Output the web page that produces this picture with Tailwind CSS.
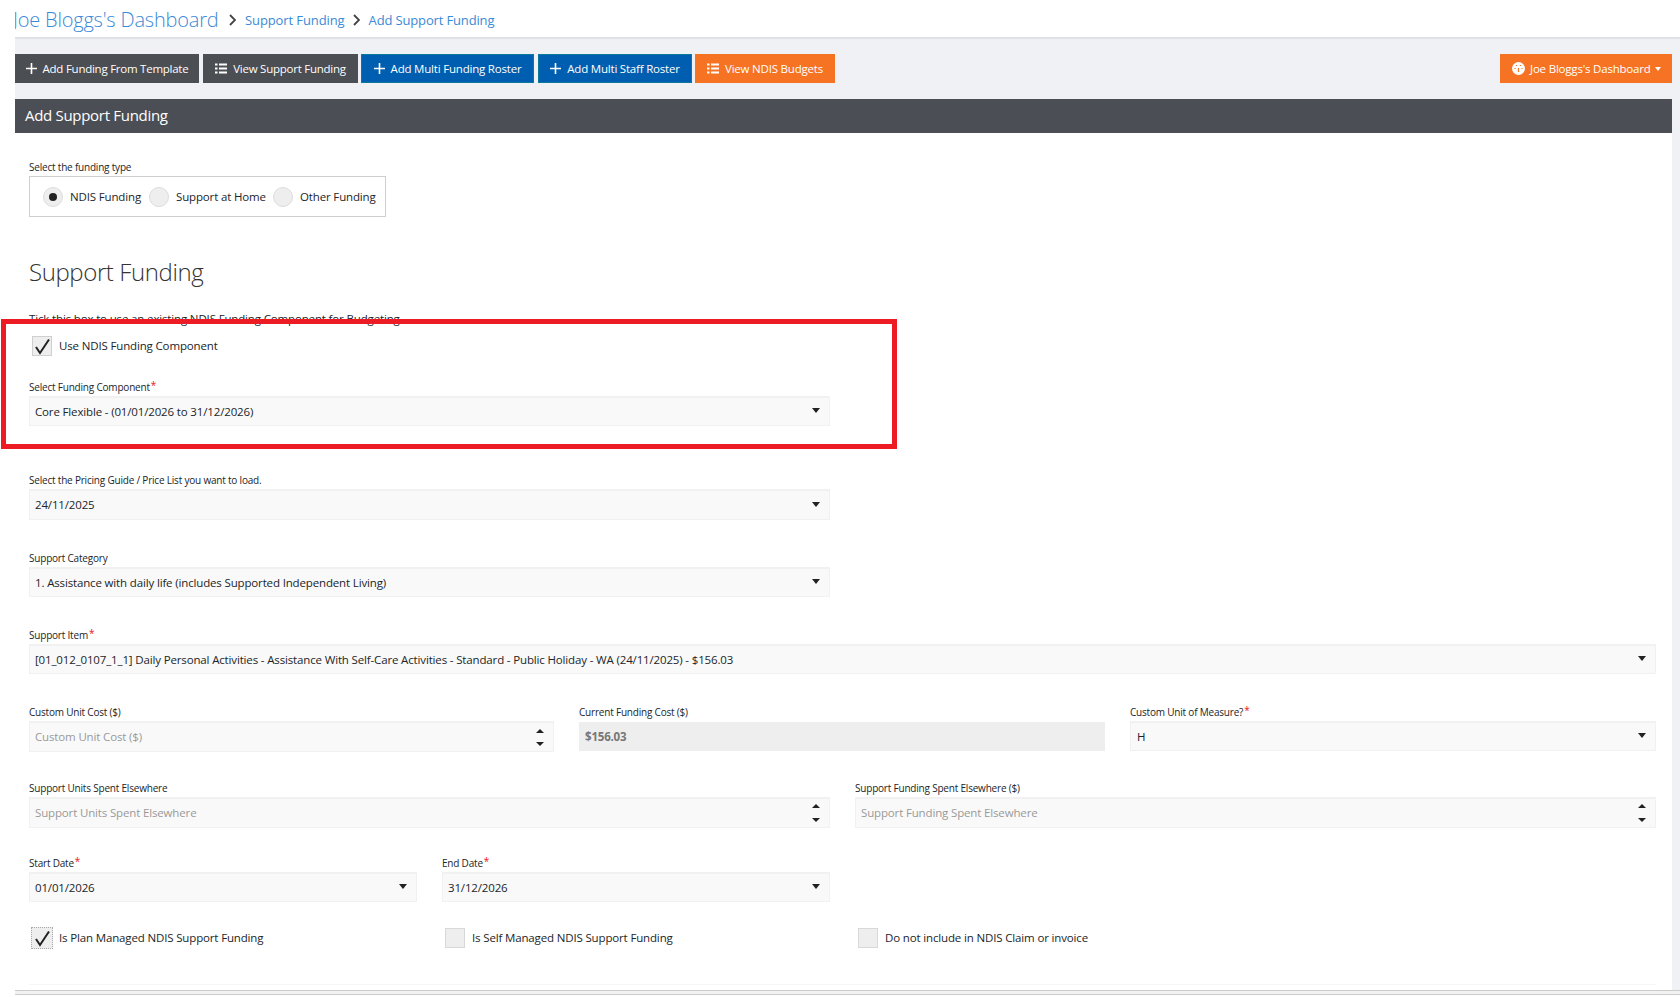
<!DOCTYPE html>
<html lang="en">
<head>
    <meta charset="UTF-8">
    <title>Add Support Funding</title>
    <script src="https://cdn.jsdelivr.net/npm/@tailwindcss/browser@4"></script>
</head>
<body class="bg-white font-['Open_Sans',sans-serif] text-[11.5px] text-[#212529] overflow-hidden">
<div class="relative h-[997px] w-[1680px] overflow-hidden">

    <!-- Breadcrumb header -->
    <header class="flex h-[37px] items-center pl-[15px] pt-[3px] text-[#3a8ad6]">
        <span class="w-[203px] overflow-hidden whitespace-nowrap text-[20px] font-light tracking-[-0.2px]"><span class="-ml-[2px] inline-block">Joe Bloggs's Dashboard</span></span>
        <svg class="ml-[11px] mr-[9px]" width="7" height="12" viewBox="0 0 7 12" fill="none" stroke="#444" stroke-width="1.8"><path d="M1 1l5 5-5 5"/></svg>
        <span class="pt-[2px] text-[13px] tracking-[-0.1px]">Support Funding</span>
        <svg class="ml-[8px] mr-[9px]" width="7" height="12" viewBox="0 0 7 12" fill="none" stroke="#444" stroke-width="1.8"><path d="M1 1l5 5-5 5"/></svg>
        <span class="pt-[2px] text-[13px] tracking-[-0.15px]">Add Support Funding</span>
    </header>

    <div class="ml-[15px] h-[953px] border-t-2 border-[#dfe1e6] bg-[#f0f1f5] pr-[8px]">
        <!-- Action buttons -->
        <div class="flex h-[60px] items-start justify-between pt-[15px] text-white">
            <div class="flex">
                <button class="flex h-[29px] w-[184px] items-center justify-center gap-[6px] bg-[#4b4e53] tracking-[-0.25px]">
                    <svg width="11" height="11" viewBox="0 0 11 11" stroke="#fff" stroke-width="1.6"><path d="M5.500 0v11M0 5.500h11"/></svg>Add Funding From Template
                </button>
                <button class="ml-[4px] flex h-[29px] w-[155px] items-center justify-center gap-[6px] bg-[#4b4e53] tracking-[-0.25px]">
                    <svg width="12" height="11" viewBox="0 0 12 11" stroke="#fff" stroke-width="2.2"><path d="M0 1.500h2.500M4 1.500h8M0 5.500h2.500M4 5.500h8M0 9.500h2.500M4 9.500h8"/></svg>View Support Funding
                </button>
                <button class="ml-[3px] flex h-[29px] w-[173px] items-center justify-center gap-[6px] border border-[#0a7a9c] bg-[#005eb0] tracking-[-0.2px]">
                    <svg width="11" height="11" viewBox="0 0 11 11" stroke="#fff" stroke-width="1.6"><path d="M5.500 0v11M0 5.500h11"/></svg>Add Multi Funding Roster
                </button>
                <button class="ml-[4px] flex h-[29px] w-[154px] items-center justify-center gap-[6px] border border-[#0a7a9c] bg-[#005eb0] tracking-[-0.2px]">
                    <svg width="11" height="11" viewBox="0 0 11 11" stroke="#fff" stroke-width="1.6"><path d="M5.500 0v11M0 5.500h11"/></svg>Add Multi Staff Roster
                </button>
                <button class="ml-[3px] flex h-[29px] w-[140px] items-center justify-center gap-[6px] bg-[#f57322] tracking-[-0.2px]">
                    <svg width="12" height="11" viewBox="0 0 12 11" stroke="#fff" stroke-width="2.2"><path d="M0 1.500h2.500M4 1.500h8M0 5.500h2.500M4 5.500h8M0 9.500h2.500M4 9.500h8"/></svg>View NDIS Budgets
                </button>
            </div>
            <button class="flex h-[29px] w-[172px] items-center bg-[#f57322] pl-[12px] tracking-[-0.2px]">
                <svg width="13" height="13" viewBox="0 0 13 13"><circle cx="6.500" cy="6.500" r="6.500" fill="#fff"/><path d="M6.500 6v4M3 6v1M10 6v1M4.500 3v1M8.500 3v1" stroke="#f57322" stroke-width="1.200"/></svg>
                <span class="ml-[5px]">Joe Bloggs's Dashboard</span>
                <span class="ml-[4px] h-0 w-0 border-x-[3.500px] border-t-[4px] border-x-transparent border-t-white"></span>
            </button>
        </div>

        <!-- Panel -->
        <section class="relative h-[891px] bg-white">
            <h2 class="flex h-[34px] items-center bg-[#4b4e55] pb-[2px] pl-[10px] text-[15px] tracking-[-0.3px] text-white">Add Support Funding</h2>

            <div class="pl-[14px] pr-[16px]">
                <p class="mt-[28px] text-[10px] leading-[12px] tracking-[-0.2px]">Select the funding type</p>
                <div class="mt-[3px] flex h-[41px] w-[357px] items-center border border-[#cfcfcf] pl-[13px] tracking-[-0.15px]">
                    <span class="flex h-[20px] w-[20px] items-center justify-center rounded-full border border-[#dcdcdc] bg-[#eeeeee]"><span class="h-[8px] w-[8px] rounded-full bg-[#222]"></span></span>
                    <span class="ml-[7px] w-[79px] pt-[1px]">NDIS Funding</span>
                    <span class="h-[20px] w-[20px] rounded-full border border-[#dcdcdc] bg-[#eeeeee]"></span>
                    <span class="ml-[7px] w-[97px] pt-[1px]">Support at Home</span>
                    <span class="h-[20px] w-[20px] rounded-full border border-[#dcdcdc] bg-[#eeeeee]"></span>
                    <span class="ml-[7px] pt-[1px]">Other Funding</span>
                </div>

                <h3 class="mt-[38px] text-[24px] font-light leading-[34px] tracking-[-0.4px] text-[#333]">Support Funding</h3>
                <p class="mt-[22px] leading-[16px] tracking-[-0.15px]">Tick this box to use an existing NDIS Funding Component for Budgeting</p>

                <label class="ml-[3px] mt-[9px] flex h-[20px] items-center tracking-[-0.15px]">
                    <span class="mr-[7px] flex h-[20px] w-[20px] items-center justify-center border border-[#cfcfcf] bg-[#eeeeee]">
                        <svg width="18" height="18" viewBox="0 0 18 18" fill="none" stroke="#222" stroke-width="2"><path d="M3 10l4 6 9-13.500"/></svg>
                    </span>
                    Use NDIS Funding Component
                </label>

                <!-- Funding fields -->
                <div class="mt-[25px] w-[801px]">
                    <p class="text-[10px] leading-[12px] tracking-[-0.2px]">Select Funding Component<span class="relative -top-[2px] ml-[1px] text-[#e11]">*</span></p>
                    <div class="mt-[3px] flex h-[30px] items-center justify-between border-x border-b border-t-2 border-[#f1f1f1] bg-[#f9f9f9] pl-[5px] pr-[9px] tracking-[-0.15px]">
                        <span>Core Flexible - (01/01/2026 to 31/12/2026)</span>
                        <span class="mb-[2px] h-0 w-0 border-x-[4px] border-t-[5px] border-x-transparent border-t-[#222]"></span>
                    </div>
                </div>

                <div class="mt-[48px] w-[801px]">
                    <p class="text-[10px] leading-[12px] tracking-[-0.2px]">Select the Pricing Guide / Price List you want to load.</p>
                    <div class="mt-[3px] flex h-[31px] items-center justify-between border-x border-b border-t-2 border-[#f1f1f1] bg-[#f9f9f9] pl-[5px] pr-[9px] tracking-[-0.15px]">
                        <span>24/11/2025</span>
                        <span class="mb-[2px] h-0 w-0 border-x-[4px] border-t-[5px] border-x-transparent border-t-[#222]"></span>
                    </div>
                </div>

                <div class="mt-[32px] w-[801px]">
                    <p class="text-[10px] leading-[12px] tracking-[-0.2px]">Support Category</p>
                    <div class="mt-[3px] flex h-[30px] items-center justify-between border-x border-b border-t-2 border-[#f1f1f1] bg-[#f9f9f9] pl-[5px] pr-[9px] tracking-[-0.15px]">
                        <span>1. Assistance with daily life (includes Supported Independent Living)</span>
                        <span class="mb-[2px] h-0 w-0 border-x-[4px] border-t-[5px] border-x-transparent border-t-[#222]"></span>
                    </div>
                </div>

                <div class="mt-[32px]">
                    <p class="text-[10px] leading-[12px] tracking-[-0.2px]">Support Item<span class="relative -top-[2px] ml-[1px] text-[#e11]">*</span></p>
                    <div class="mt-[3px] flex h-[30px] items-center justify-between border-x border-b border-t-2 border-[#f1f1f1] bg-[#f9f9f9] pl-[5px] pr-[9px] tracking-[-0.15px]">
                        <span>[01_012_0107_1_1] Daily Personal Activities - Assistance With Self-Care Activities - Standard - Public Holiday - WA (24/11/2025) - $156.03</span>
                        <span class="mb-[2px] h-0 w-0 border-x-[4px] border-t-[5px] border-x-transparent border-t-[#222]"></span>
                    </div>
                </div>

                <div class="mt-[32px] grid grid-cols-[525px_526px_526px] gap-x-[25px]">
                    <div>
                        <p class="text-[10px] leading-[12px] tracking-[-0.2px]">Custom Unit Cost ($)</p>
                        <div class="mt-[3px] flex h-[31px] items-center justify-between border-x border-b border-t-2 border-[#f1f1f1] bg-[#f9f9f9] pl-[5px] pr-[9px] tracking-[-0.15px] text-[#999]">
                            <span>Custom Unit Cost ($)</span>
                            <span class="flex flex-col gap-[9px]">
                                <span class="h-0 w-0 border-x-[4px] border-b-[4px] border-x-transparent border-b-[#222]"></span>
                                <span class="h-0 w-0 border-x-[4px] border-t-[4px] border-x-transparent border-t-[#222]"></span>
                            </span>
                        </div>
                    </div>
                    <div>
                        <p class="text-[10px] leading-[12px] tracking-[-0.2px]">Current Funding Cost ($)</p>
                        <div class="mt-[4px] flex h-[29px] items-center bg-[#eeeeee] pl-[6px] font-bold tracking-[-0.2px] text-[#777]">$156.03</div>
                    </div>
                    <div>
                        <p class="text-[10px] leading-[12px] tracking-[-0.2px]">Custom Unit of Measure?<span class="relative -top-[2px] ml-[1px] text-[#e11]">*</span></p>
                        <div class="mt-[3px] flex h-[30px] items-center justify-between border-x border-b border-t-2 border-[#f1f1f1] bg-[#f9f9f9] pl-[6px] pr-[9px]">
                            <span>H</span>
                            <span class="mb-[2px] h-0 w-0 border-x-[4px] border-t-[5px] border-x-transparent border-t-[#222]"></span>
                        </div>
                    </div>
                </div>

                <div class="mt-[30px] grid grid-cols-[801px_801px] gap-x-[25px]">
                    <div>
                        <p class="text-[10px] leading-[12px] tracking-[-0.2px]">Support Units Spent Elsewhere</p>
                        <div class="mt-[3px] flex h-[31px] items-center justify-between border-x border-b border-t-2 border-[#f1f1f1] bg-[#f9f9f9] pl-[5px] pr-[9px] tracking-[-0.15px] text-[#999]">
                            <span>Support Units Spent Elsewhere</span>
                            <span class="flex flex-col gap-[10px]">
                                <span class="h-0 w-0 border-x-[4px] border-b-[4px] border-x-transparent border-b-[#222]"></span>
                                <span class="h-0 w-0 border-x-[4px] border-t-[4px] border-x-transparent border-t-[#222]"></span>
                            </span>
                        </div>
                    </div>
                    <div>
                        <p class="text-[10px] leading-[12px] tracking-[-0.2px]">Support Funding Spent Elsewhere ($)</p>
                        <div class="mt-[3px] flex h-[31px] items-center justify-between border-x border-b border-t-2 border-[#f1f1f1] bg-[#f9f9f9] pl-[5px] pr-[9px] tracking-[-0.15px] text-[#999]">
                            <span>Support Funding Spent Elsewhere</span>
                            <span class="flex flex-col gap-[10px]">
                                <span class="h-0 w-0 border-x-[4px] border-b-[4px] border-x-transparent border-b-[#222]"></span>
                                <span class="h-0 w-0 border-x-[4px] border-t-[4px] border-x-transparent border-t-[#222]"></span>
                            </span>
                        </div>
                    </div>
                </div>

                <div class="mt-[29px] grid w-[801px] grid-cols-[388px_388px] gap-x-[25px]">
                    <div>
                        <p class="text-[10px] leading-[12px] tracking-[-0.2px]">Start Date<span class="relative -top-[2px] ml-[1px] text-[#e11]">*</span></p>
                        <div class="mt-[3px] flex h-[30px] items-center justify-between border-x border-b border-t-2 border-[#f1f1f1] bg-[#f9f9f9] pl-[5px] pr-[9px] tracking-[-0.15px]">
                            <span>01/01/2026</span>
                            <span class="mb-[2px] h-0 w-0 border-x-[4px] border-t-[5px] border-x-transparent border-t-[#222]"></span>
                        </div>
                    </div>
                    <div>
                        <p class="text-[10px] leading-[12px] tracking-[-0.2px]">End Date<span class="relative -top-[2px] ml-[1px] text-[#e11]">*</span></p>
                        <div class="mt-[3px] flex h-[30px] items-center justify-between border-x border-b border-t-2 border-[#f1f1f1] bg-[#f9f9f9] pl-[5px] pr-[9px] tracking-[-0.15px]">
                            <span>31/12/2026</span>
                            <span class="mb-[2px] h-0 w-0 border-x-[4px] border-t-[5px] border-x-transparent border-t-[#222]"></span>
                        </div>
                    </div>
                </div>

                <!-- Plan flags -->
                <div class="mt-[26px] flex h-[20px] items-center tracking-[-0.15px]">
                    <label class="ml-[2px] flex w-[414px] items-center">
                        <span class="mr-[6px] flex h-[22px] w-[22px] items-center justify-center border border-dotted border-[#aaa] bg-[#eeeeee]">
                            <svg width="18" height="18" viewBox="0 0 18 18" fill="none" stroke="#222" stroke-width="2"><path d="M3 10l4 6 9-13.500"/></svg>
                        </span>
                        Is Plan Managed NDIS Support Funding
                    </label>
                    <label class="flex w-[413px] items-center">
                        <span class="mr-[7px] h-[20px] w-[20px] border border-[#d8d8d8] bg-[#eeeeee]"></span>
                        Is Self Managed NDIS Support Funding
                    </label>
                    <label class="flex items-center">
                        <span class="mr-[7px] h-[20px] w-[20px] border border-[#d8d8d8] bg-[#eeeeee]"></span>
                        Do not include in NDIS Claim or invoice
                    </label>
                </div>

                <div class="mt-[36px] h-px bg-[#f6f6f6]"></div>
            </div>
        </section>
    </div>
    <div class="ml-[15px] h-[5px] border-y border-[#cccccc] bg-[#f2f2f2]"></div>

    <!-- Red highlight drawn over the screenshot -->
    <div class="absolute left-[1px] top-[319px] h-[130px] w-[896px] border-[5px] border-[#ed1c24]"></div>
</div>
</body>
</html>
